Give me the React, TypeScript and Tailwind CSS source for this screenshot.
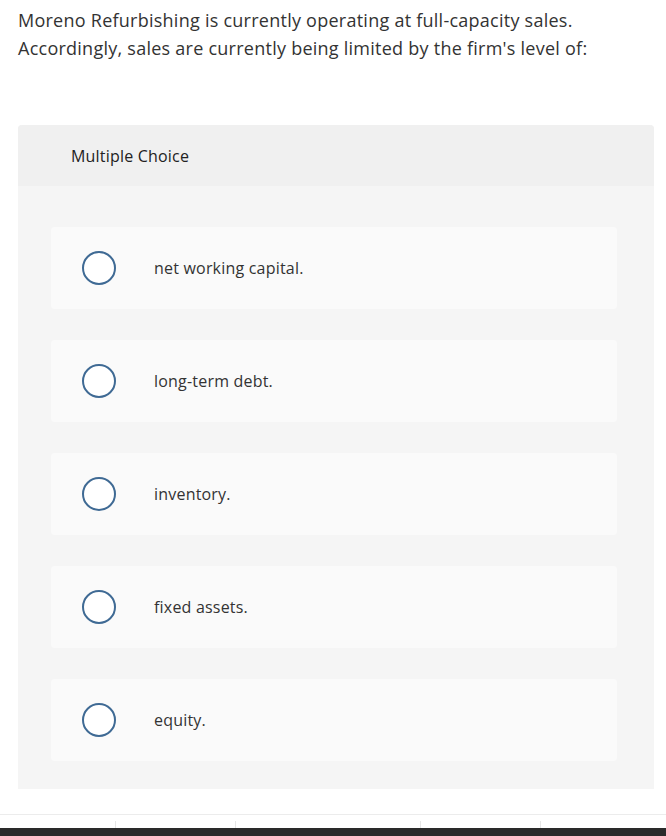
const options = [
  "net working capital.",
  "long-term debt.",
  "inventory.",
  "fixed assets.",
  "equity.",
];

function Radio() {
  return (
    <span className="block w-[34px] h-[34px] rounded-full border-2 border-[#3f6a94] bg-white shrink-0" />
  );
}

export default function App() {
  return (
    <div
      className="w-[666px] h-[836px] bg-white flex flex-col overflow-hidden text-[#2d2d2d]"
      style={{ fontFamily: "'Open Sans', Lato, sans-serif" }}
    >
      <div className="px-[18px] pt-[6px] text-[18px] leading-[28px] tracking-[0.25px] text-[#333]">
        <p>Moreno Refurbishing is currently operating at full-capacity sales.</p>
        <p>Accordingly, sales are currently being limited by the firm's level of:</p>
      </div>

      <div className="mt-[63px] mx-[18px] w-[636px] rounded-t-[4px] bg-[#f5f5f5]">
        <div className="h-[61px] bg-[#f0f0f0] rounded-t-[4px] flex items-center pl-[53px] text-[16px] tracking-[0.2px] text-[#222]">
          Multiple Choice
        </div>
        <div className="pt-[41px] pb-[28px] pl-[33px] pr-[37px] flex flex-col gap-[31px]">
          {options.map((o) => (
            <div
              key={o}
              className="h-[82px] rounded-[4px] bg-[#fafafa] flex items-center pl-[31px]"
            >
              <Radio />
              <span className="ml-[38px] text-[16px] tracking-[0.2px] text-[#333]">{o}</span>
            </div>
          ))}
        </div>
      </div>

      <div className="mt-[25px] border-t border-[#ececec] h-[14px] flex">
        <div className="w-[116px] border-r border-[#e6e6e6] mt-[6px]" />
        <div className="w-[120px] border-r border-[#e6e6e6] mt-[6px]" />
        <div className="w-[185px] border-r border-[#e6e6e6] mt-[6px]" />
        <div className="w-[120px] border-r border-[#e6e6e6] mt-[6px]" />
      </div>
      <div className="flex-1 bg-[#2a2a2a]" />
    </div>
  );
}
